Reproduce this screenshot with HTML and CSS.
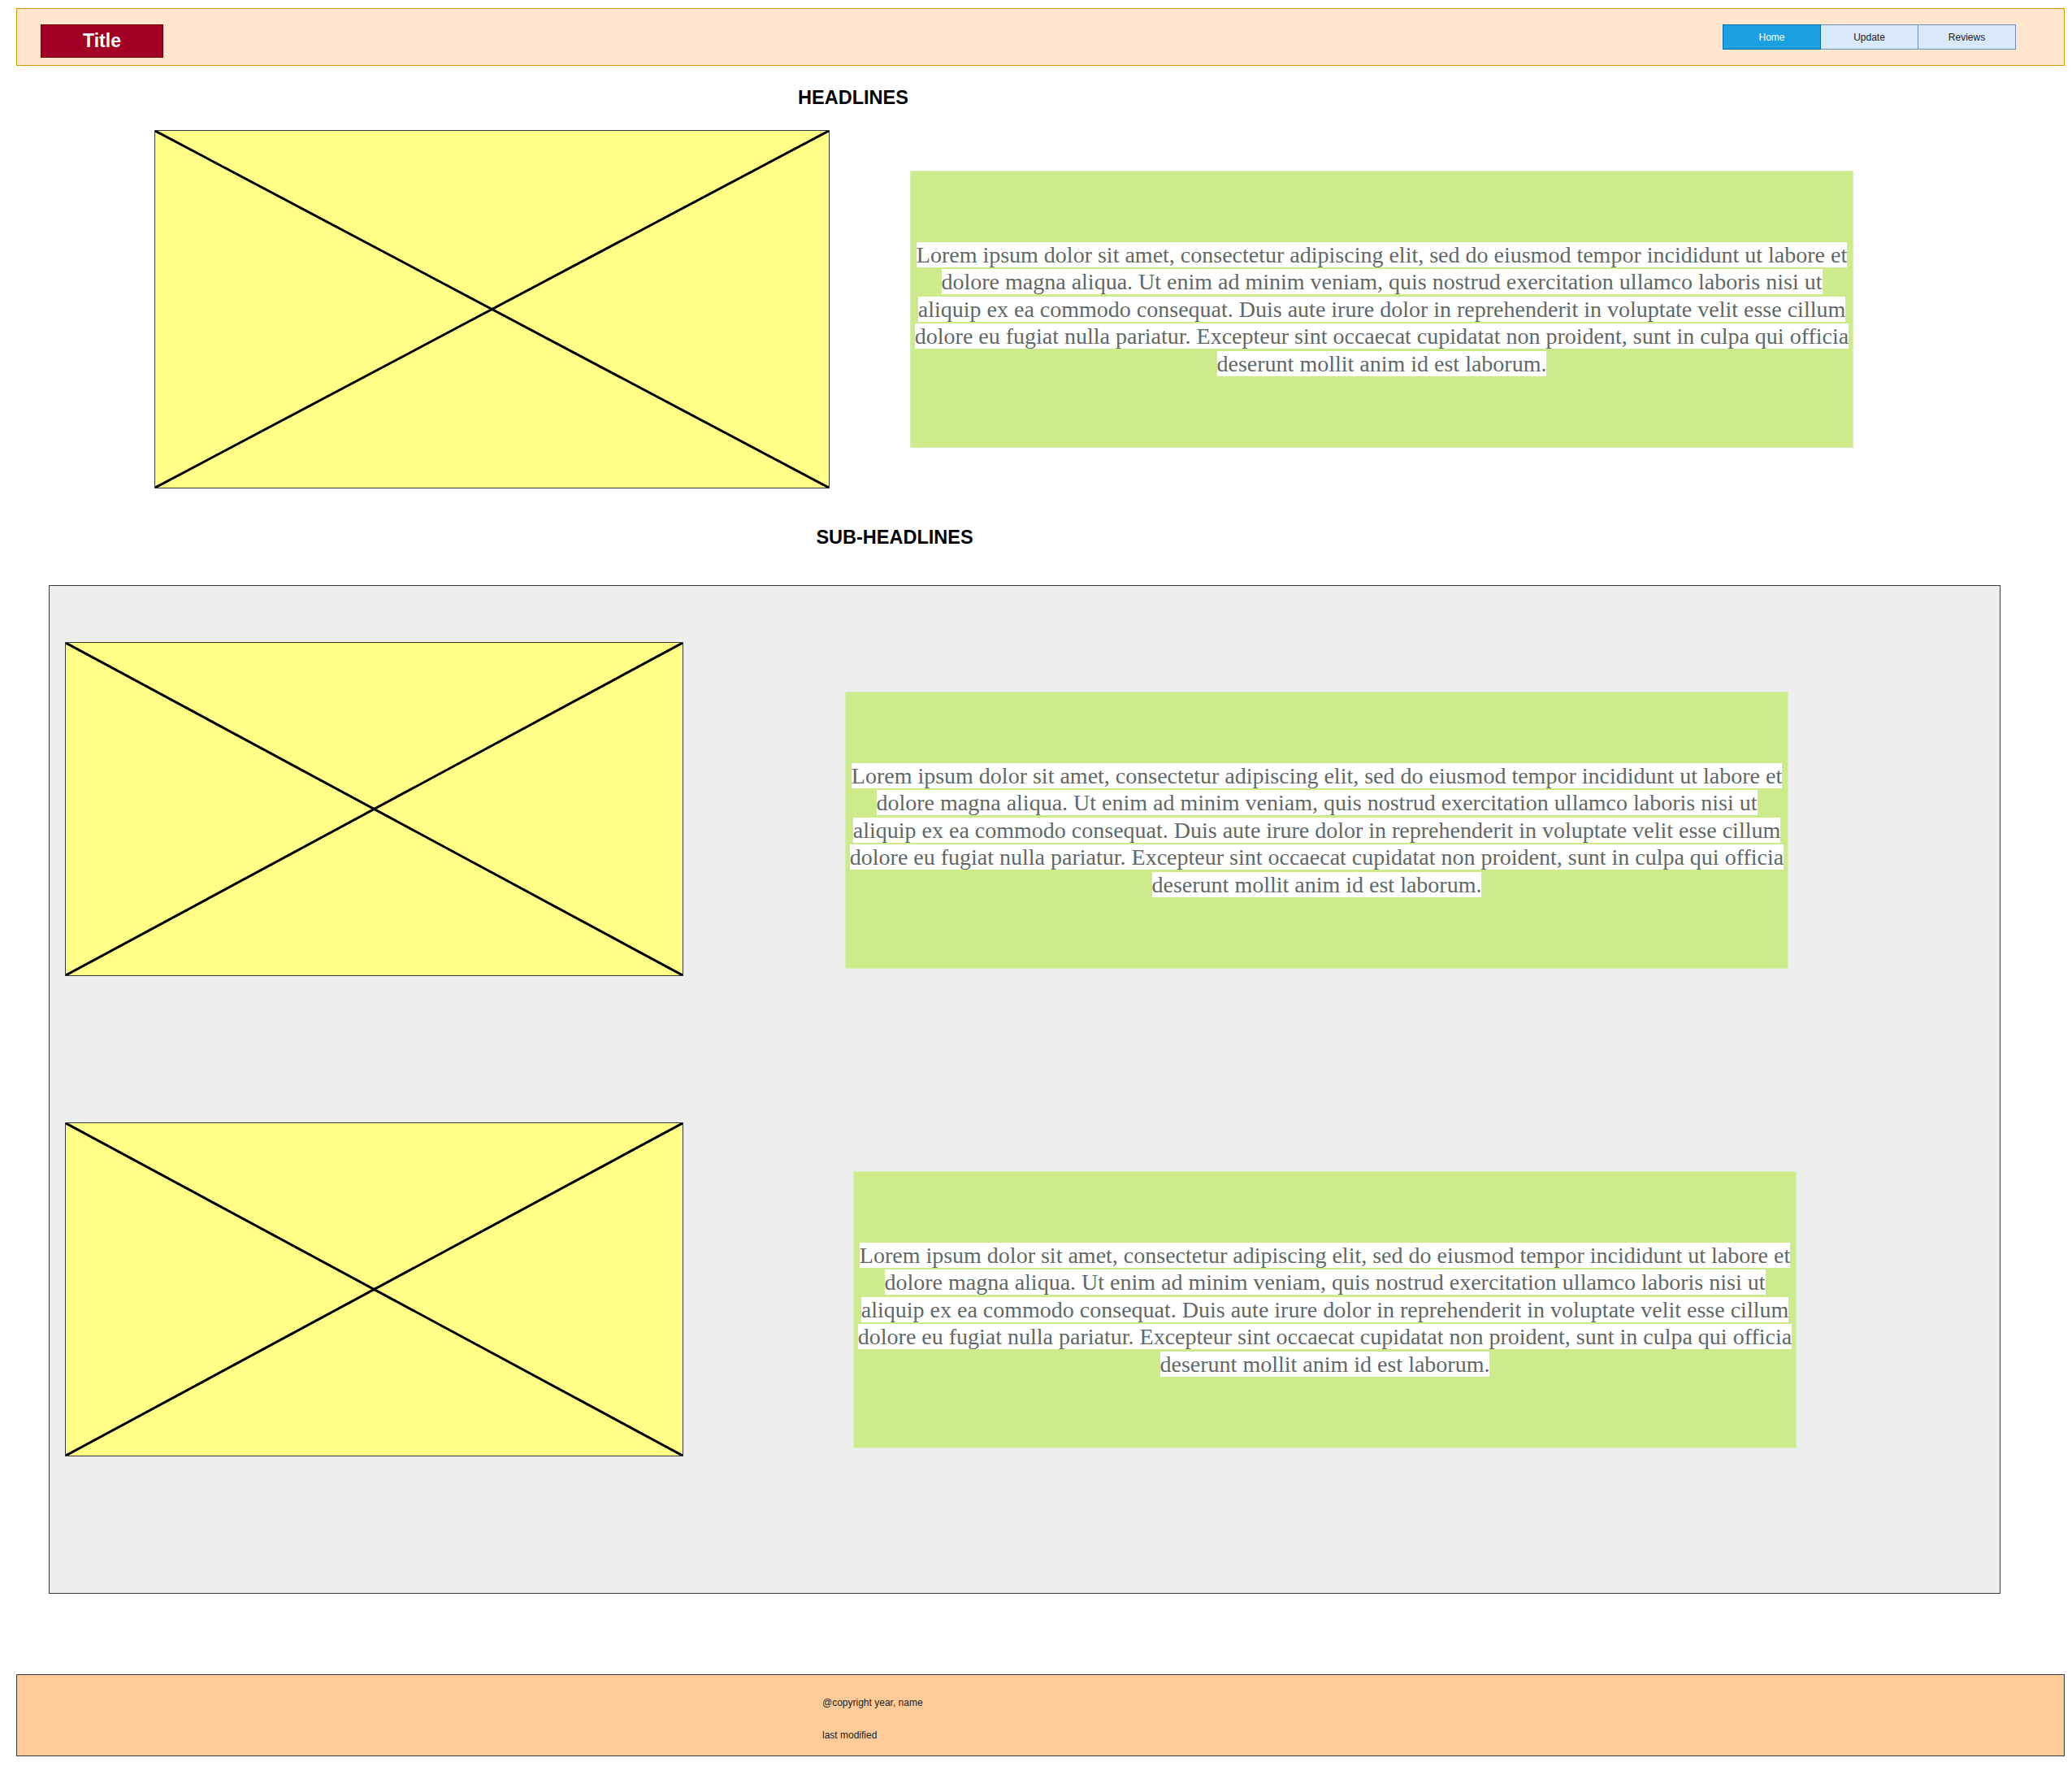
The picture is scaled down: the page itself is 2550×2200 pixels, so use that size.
FILE: index.html
```html
<!DOCTYPE html>
<html lang="en">
<head>
<meta charset="utf-8">
<title>Wireframe</title>
<link rel="stylesheet" href="styles.css">
</head>
<body>
<header class="topbar">
  <div class="title">Title</div>
  <nav class="tabs">
    <a class="tab tab-active">Home</a>
    <a class="tab">Update</a>
    <a class="tab">Reviews</a>
  </nav>
</header>

<h2 class="heading heading-main">HEADLINES</h2>
<section class="feature">
  <div class="placeholder ph-large">
    <svg viewBox="0 0 100 100" preserveAspectRatio="none"><line x1="0" y1="0" x2="100" y2="100"/><line x1="100" y1="0" x2="0" y2="100"/></svg>
  </div>
  <div class="textbox">
    <p class="lorem"><span>Lorem ipsum dolor sit amet, consectetur adipiscing elit, sed do eiusmod tempor incididunt ut labore et dolore magna aliqua. Ut enim ad minim veniam, quis nostrud exercitation ullamco laboris nisi ut aliquip ex ea commodo consequat. Duis aute irure dolor in reprehenderit in voluptate velit esse cillum dolore eu fugiat nulla pariatur. Excepteur sint occaecat cupidatat non proident, sunt in culpa qui officia deserunt mollit anim id est laborum.</span></p>
  </div>
</section>

<h2 class="heading heading-sub">SUB-HEADLINES</h2>
<section class="panel">
  <div class="row row-a">
    <div class="placeholder ph-small">
      <svg viewBox="0 0 100 100" preserveAspectRatio="none"><line x1="0" y1="0" x2="100" y2="100"/><line x1="100" y1="0" x2="0" y2="100"/></svg>
    </div>
    <div class="textbox">
      <p class="lorem"><span>Lorem ipsum dolor sit amet, consectetur adipiscing elit, sed do eiusmod tempor incididunt ut labore et dolore magna aliqua. Ut enim ad minim veniam, quis nostrud exercitation ullamco laboris nisi ut aliquip ex ea commodo consequat. Duis aute irure dolor in reprehenderit in voluptate velit esse cillum dolore eu fugiat nulla pariatur. Excepteur sint occaecat cupidatat non proident, sunt in culpa qui officia deserunt mollit anim id est laborum.</span></p>
    </div>
  </div>
  <div class="row row-b">
    <div class="placeholder ph-small">
      <svg viewBox="0 0 100 100" preserveAspectRatio="none"><line x1="0" y1="0" x2="100" y2="100"/><line x1="100" y1="0" x2="0" y2="100"/></svg>
    </div>
    <div class="textbox">
      <p class="lorem"><span>Lorem ipsum dolor sit amet, consectetur adipiscing elit, sed do eiusmod tempor incididunt ut labore et dolore magna aliqua. Ut enim ad minim veniam, quis nostrud exercitation ullamco laboris nisi ut aliquip ex ea commodo consequat. Duis aute irure dolor in reprehenderit in voluptate velit esse cillum dolore eu fugiat nulla pariatur. Excepteur sint occaecat cupidatat non proident, sunt in culpa qui officia deserunt mollit anim id est laborum.</span></p>
    </div>
  </div>
</section>

<footer class="footer">
  <p>@copyright year, name</p>
  <p>last modified</p>
</footer>
</body>
</html>
```

FILE: styles.css
```css
html, body {
  margin: 0;
  padding: 0;
  background: #ffffff;
}

body {
  width: 2550px;
  font-family: "Liberation Sans", Arial, sans-serif;
  color: #000000;
}

/* ---------- top bar ---------- */
.topbar {
  box-sizing: border-box;
  width: 2521px;
  height: 71px;
  margin: 10px 0 0 20px;
  padding: 19px 59px 0 29px;
  border: 1px solid #d79b00;
  background: #ffe6cc;
  display: flex;
  justify-content: space-between;
  align-items: flex-start;
}

.title {
  box-sizing: border-box;
  width: 151px;
  height: 41px;
  border: 1px solid #6f0000;
  background: #a20025;
  color: #ffffff;
  font-size: 23px;
  font-weight: bold;
  display: flex;
  align-items: center;
  justify-content: center;
}

.tabs {
  display: flex;
}

.tab {
  box-sizing: border-box;
  width: 120px;
  height: 31px;
  border: 1px solid #6c8ebf;
  border-left: 0;
  background: #dae8fc;
  color: #1a1a1a;
  font-size: 12px;
  display: flex;
  align-items: center;
  justify-content: center;
}

.tab-active {
  width: 121px;
  border: 1px solid #006eaf;
  background: #1ba1e2;
  color: #ffffff;
}

/* ---------- headings ---------- */
.heading {
  width: 300px;
  margin: 0;
  font-size: 23.5px;
  line-height: 28px;
  font-weight: bold;
  text-align: center;
  color: #000000;
}

.heading-main {
  margin: 25px 0 0 900px;
}

.heading-sub {
  margin: 46px 0 0 951px;
}

/* ---------- placeholders & text boxes ---------- */
.placeholder {
  box-sizing: border-box;
  flex: none;
  border: 1px solid #36393d;
  background: #ffff88;
}

.placeholder svg {
  display: block;
  width: 100%;
  height: 100%;
}

.placeholder line {
  stroke: #000000;
  stroke-width: 3;
  vector-effect: non-scaling-stroke;
}

.ph-large {
  width: 831px;
  height: 441px;
}

.ph-small {
  width: 761px;
  height: 411px;
}

.textbox {
  box-sizing: border-box;
  flex: none;
  width: 1161px;
  height: 341px;
  padding: 0 1px;
  border: 1px solid #d7efb2;
  background: #cdeb8b;
  display: flex;
  align-items: center;
  justify-content: center;
}

.lorem {
  margin: 0;
  font-family: "Liberation Serif", "Times New Roman", serif;
  font-size: 28px;
  line-height: 33.5px;
  color: #5f6866;
  text-align: center;
}

.lorem span {
  background: #ffffff;
}

/* ---------- feature row ---------- */
.feature {
  display: flex;
  align-items: center;
  gap: 99px;
  margin: 26px 0 0 190px;
}

/* ---------- grey panel ---------- */
.panel {
  box-sizing: border-box;
  width: 2402px;
  margin: 45px 0 0 60px;
  padding: 69px 0 168px 19px;
  border: 1px solid #36393d;
  background: #eeeeee;
  display: flex;
  flex-direction: column;
  gap: 180px;
}

.row {
  display: flex;
  align-items: flex-start;
}

.row-a {
  gap: 199px;
}

.row-a .textbox {
  margin-top: 61px;
}

.row-b {
  gap: 209px;
}

.row-b .textbox {
  margin-top: 60px;
}

/* ---------- footer ---------- */
.footer {
  box-sizing: border-box;
  width: 2521px;
  height: 101px;
  margin: 99px 0 0 20px;
  padding: 27px 0 0 991px;
  border: 1px solid #36393d;
  background: #ffcc99;
}

.footer p {
  margin: 0;
  font-size: 12px;
  line-height: 14px;
  color: #1a1a1a;
}

.footer p + p {
  margin-top: 26px;
}
```
